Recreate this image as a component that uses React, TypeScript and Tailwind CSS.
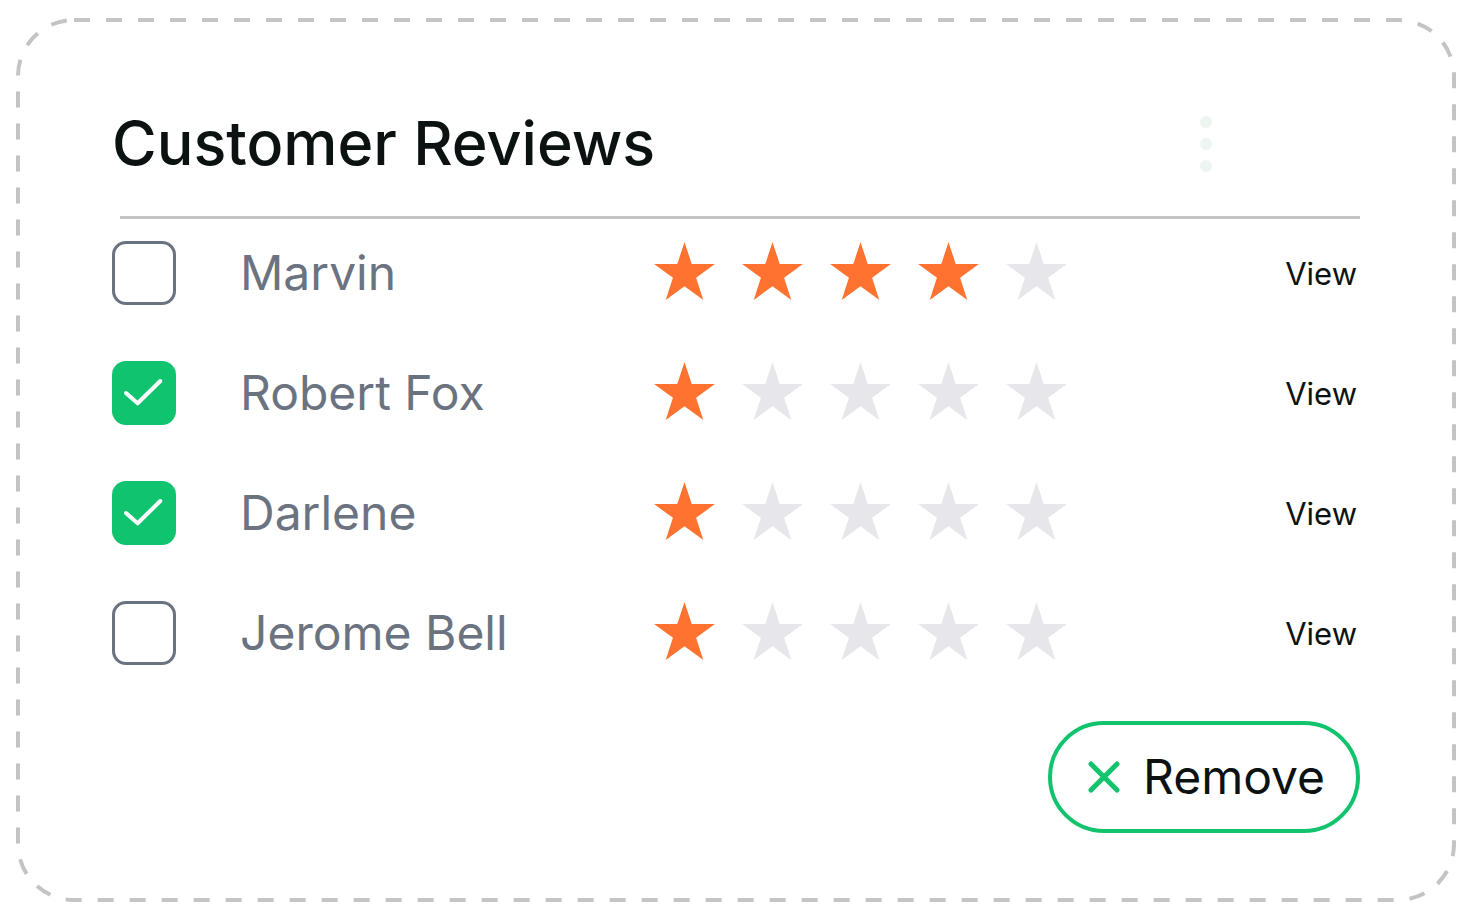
interface Review {
  name: string;
  rating: number;
  checked: boolean;
}

const REVIEWS: Review[] = [
  { name: "Marvin", rating: 4, checked: false },
  { name: "Robert Fox", rating: 1, checked: true },
  { name: "Darlene", rating: 1, checked: true },
  { name: "Jerome Bell", rating: 1, checked: false },
];

function Star({ filled }: { filled: boolean }) {
  return (
    <svg width="61" height="58" viewBox="0 0 61 58" className="shrink-0">
      <polygon
        points="30.5,0 37.7,22.1 60.9,22.1 42.1,35.8 49.3,57.9 30.5,44.2 11.7,57.9 18.9,35.8 0.1,22.1 23.3,22.1"
        fill={filled ? "#ff7230" : "#e6e6eb"}
      />
    </svg>
  );
}

function Checkbox({ checked }: { checked: boolean }) {
  if (checked) {
    return (
      <div className="w-[64px] h-[64px] rounded-[14px] bg-[#10c46f] flex items-center justify-center shrink-0">
        <svg width="64" height="64" viewBox="0 0 64 64">
          <path d="M14 32 L25.6 42.3 L48.3 20" fill="none" stroke="white" strokeWidth="4" strokeLinecap="round" strokeLinejoin="round" />
        </svg>
      </div>
    );
  }
  return <div className="w-[64px] h-[64px] rounded-[14px] border-[3.5px] border-[#6b7280] shrink-0" />;
}

export default function App() {
  return (
    <div className="w-[1472px] h-[917px] bg-white pt-[18px] pl-[16px]" style={{ fontFamily: "Inter, 'Noto Sans', sans-serif" }}>
      <div className="relative w-[1440px] h-[884px] px-[96px] pt-[95px]">
        {/* dashed frame */}
        <svg className="absolute inset-0 pointer-events-none" width="1440" height="884" viewBox="0 0 1440 884">
          <rect x="2" y="2" width="1436" height="880" rx="56" fill="none" stroke="#c4c4c4" strokeWidth="4" strokeDasharray="16 16" />
        </svg>

        <div className="flex items-center">
          <h1 className="text-[61px] leading-none font-medium text-[#0b1211]">Customer Reviews</h1>
          <div className="ml-auto mr-[148px] flex flex-col gap-[10px]">
            <span className="block w-[12px] h-[12px] rounded-full bg-[#edf5f0]" />
            <span className="block w-[12px] h-[12px] rounded-full bg-[#edf5f0]" />
            <span className="block w-[12px] h-[12px] rounded-full bg-[#edf5f0]" />
          </div>
        </div>

        <div className="mt-[42px] ml-[8px] h-[3px] bg-[#c4c4c4]" />

        <div className="mt-[22px] flex flex-col gap-[56px]">
          {REVIEWS.map((r) => (
            <div key={r.name} className="flex items-center h-[64px]">
              <Checkbox checked={r.checked} />
              <span className="ml-[64px] w-[414px] text-[48px] leading-none text-[#6b7280]">{r.name}</span>
              <div className="flex items-center gap-[27px] mb-[4px]">
                {[0, 1, 2, 3, 4].map((i) => (
                  <Star key={i} filled={i < r.rating} />
                ))}
              </div>
              <span className="ml-auto mr-[3px] text-[31px] leading-none text-[#0b1211]">View</span>
            </div>
          ))}
        </div>

        <div className="mt-[56px] flex justify-end">
          <button className="w-[312px] h-[112px] rounded-full border-[4px] border-[#12c36e] flex items-center gap-[23px] pl-[36px]">
            <svg width="32" height="32" viewBox="0 0 32 32">
              <path d="M3 3 L29 29 M29 3 L3 29" stroke="#12c36e" strokeWidth="5" strokeLinecap="round" />
            </svg>
            <span className="text-[48px] leading-none text-[#0b1211]">Remove</span>
          </button>
        </div>
      </div>
    </div>
  );
}
